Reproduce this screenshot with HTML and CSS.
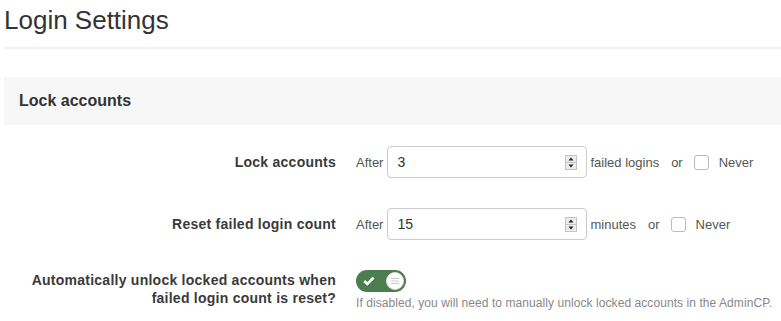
FILE: index.html
```html
<!DOCTYPE html>
<html lang="en">
<head>
    <meta charset="UTF-8">
    <meta name="viewport" content="width=device-width, initial-scale=1.0">
    <title>Login Settings</title>
    <link rel="stylesheet" href="styles.css">
</head>
<body>
    <div class="page">
        <h1 class="page-title">Login Settings</h1>

        <div class="block">
            <h2 class="block-header">Lock accounts</h2>

            <div class="block-body">
                <div class="form-row">
                    <label class="form-label">Lock accounts</label>
                    <div class="form-controls">
                        <span class="hint-text">After</span>
                        <div class="number-box">
                            <input class="number-input" type="text" value="3">
                            <span class="spinner">
                                <svg width="12" height="15" viewBox="0 0 12 15">
                                    <rect x="0.5" y="0.5" width="11" height="14" fill="#ececec" stroke="#c4c4c4"/>
                                    <line x1="1" y1="7.5" x2="11" y2="7.5" stroke="#c4c4c4"/>
                                    <path d="M3.5 5.5 L6 2.5 L8.5 5.5 Z" fill="#222"/>
                                    <path d="M3.5 9.5 L6 12.5 L8.5 9.5 Z" fill="#222"/>
                                </svg>
                            </span>
                        </div>
                        <span class="unit">failed logins</span>
                        <span class="or">or</span>
                        <span class="checkbox"></span>
                        <span class="never">Never</span>
                    </div>
                </div>

                <div class="form-row">
                    <label class="form-label">Reset failed login count</label>
                    <div class="form-controls">
                        <span class="hint-text">After</span>
                        <div class="number-box">
                            <input class="number-input" type="text" value="15">
                            <span class="spinner">
                                <svg width="12" height="15" viewBox="0 0 12 15">
                                    <rect x="0.5" y="0.5" width="11" height="14" fill="#ececec" stroke="#c4c4c4"/>
                                    <line x1="1" y1="7.5" x2="11" y2="7.5" stroke="#c4c4c4"/>
                                    <path d="M3.5 5.5 L6 2.5 L8.5 5.5 Z" fill="#222"/>
                                    <path d="M3.5 9.5 L6 12.5 L8.5 9.5 Z" fill="#222"/>
                                </svg>
                            </span>
                        </div>
                        <span class="unit">minutes</span>
                        <span class="or">or</span>
                        <span class="checkbox"></span>
                        <span class="never">Never</span>
                    </div>
                </div>

                <div class="form-row form-row-top">
                    <label class="form-label">Automatically unlock locked accounts when failed login count is reset?</label>
                    <div class="form-stack">
                        <span class="toggle">
                            <svg class="toggle-check" width="12" height="10" viewBox="0 0 12 10">
                                <path d="M1.2 5 L4.3 8 L10.6 1.6" fill="none" stroke="#fff" stroke-width="2.6"/>
                            </svg>
                            <span class="toggle-knob">
                                <svg width="10" height="8" viewBox="0 0 10 8">
                                    <path d="M1 1.5 H9 M1 4 H9 M1 6.5 H9" stroke="#c8c8c8" stroke-width="1"/>
                                </svg>
                            </span>
                        </span>
                        <p class="help-text">If disabled, you will need to manually unlock locked accounts in the AdminCP.</p>
                    </div>
                </div>
            </div>
        </div>
    </div>
</body>
</html>
```

FILE: styles.css
```css
body {
    margin: 0;
    font-family: 'Liberation Sans', Arial, sans-serif;
    color: #333;
    background: #fff;
    overflow: hidden;
}
.page {
    padding-left: 4px;
}
.page-title {
    margin: 5px 0 0;
    font-size: 26px;
    line-height: 30px;
    font-weight: normal;
    color: #333;
    padding-bottom: 12px;
    border-bottom: 2px solid #f0f0f0;
}
.block {
    margin-top: 28px;
}
.block-header {
    margin: 0;
    height: 48px;
    line-height: 48px;
    padding-left: 15px;
    background: #f7f7f7;
    font-size: 16px;
    font-weight: bold;
    color: #333;
}
.block-body {
    padding-top: 21px;
}
.form-row {
    display: grid;
    grid-template-columns: 332px 1fr;
    column-gap: 20px;
    align-items: center;
    margin-bottom: 30px;
}
.form-row:last-child {
    margin-bottom: 0;
}
.form-row-top {
    align-items: start;
}
.form-label {
    text-align: right;
    font-size: 14px;
    line-height: 18px;
    font-weight: bold;
    letter-spacing: 0.25px;
    color: #3a3a3a;
}
.form-row-top .form-label {
    margin-top: 1px;
}
.form-controls {
    display: flex;
    align-items: center;
    font-size: 13px;
    color: #555;
}
.number-box {
    display: flex;
    align-items: center;
    width: 198px;
    height: 30px;
    margin-left: 4px;
    border: 1px solid #ccc;
    border-radius: 4px;
    background: #fff;
}
.number-input {
    flex: 1;
    min-width: 0;
    border: none;
    outline: none;
    padding: 0 0 0 9px;
    font-family: 'Liberation Sans', Arial, sans-serif;
    font-size: 14px;
    color: #333;
    background: transparent;
}
.spinner {
    display: flex;
    margin-right: 9px;
}
.unit {
    margin-left: 3px;
}
.or {
    margin-left: 12px;
}
.checkbox {
    width: 13px;
    height: 13px;
    margin-left: 11px;
    border: 1px solid #bbb;
    border-radius: 3px;
    background: #fff;
}
.never {
    margin-left: 10px;
}
.form-stack {
    display: flex;
    flex-direction: column;
    align-items: flex-start;
}
.toggle {
    display: flex;
    align-items: center;
    justify-content: space-between;
    width: 50px;
    height: 22px;
    padding: 0 2px 0 7px;
    box-sizing: border-box;
    border-radius: 11px;
    background: #4b7d4f;
}
.toggle-knob {
    display: flex;
    align-items: center;
    justify-content: center;
    width: 18px;
    height: 18px;
    box-sizing: border-box;
    border-radius: 50%;
    border: 1px solid #e2e2e2;
    background: #fff;
}
.help-text {
    margin: 3px 0 0;
    font-size: 12px;
    line-height: 16px;
    letter-spacing: 0.07px;
    color: #888;
}
```
